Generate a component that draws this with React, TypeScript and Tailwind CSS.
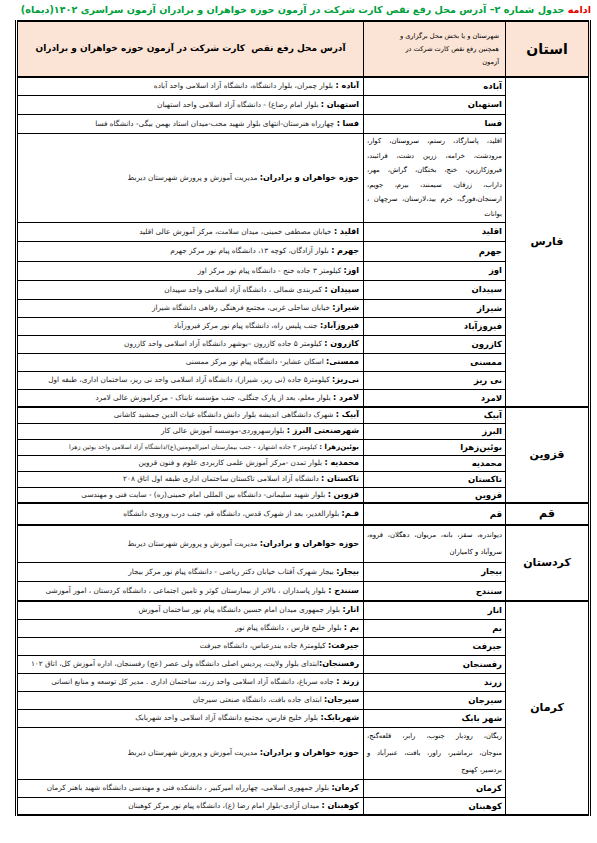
import React from 'react';

interface Row {
    city: string;
    label: string;
    addr: string;
    h: string;
    lines?: string[];   // several towns listed in one cell
    lead?: string;
    tiny?: boolean;
}

interface Province {
    name: string;
    rows: Row[];
}

const ZONE = 'حوزه خواهران و برادران:';
const ZONE_ADDR = ' مدیریت آموزش و پرورش شهرستان ذیربط';

const provinces: Province[] = [
    {
        name: 'فارس',
        rows: [
            { city: 'آباده', label: 'آباده :', addr: ' بلوار چمران، بلوار دانشگاه، دانشگاه آزاد اسلامی واحد آباده', h: 'h-[18px]' },
            { city: 'استهبان', label: 'استهبان :', addr: ' بلوار امام رضاع) - دانشگاه آزاد اسلامی واحد استهبان', h: 'h-[19px]' },
            { city: 'فسا', label: 'فسا :', addr: ' چهارراه هنرستان-انتهای بلوار شهید محب-میدان استاد بهمن بیگی- دانشگاه فسا', h: 'h-[19px]' },
            {
                city: '', label: ZONE, addr: ZONE_ADDR, h: 'h-[89px]', lead: 'leading-[14.5px]',
                lines: [
                    'اقلید، پاسارگاد، رستم، سروستان، کوار،',
                    'مرودشت، خرامه، زرین دشت، قرائبند،',
                    'فیروزکارزین، خنج، بختگان، گراش، مهر،',
                    'داراب، زرقان، سیمنند، بیرم، جویم،',
                    'ارسنجان،فورگ، خرم بید،لارستان، سرچهان ،',
                    'بوانات',
                ],
            },
            { city: 'اقلید', label: 'اقلید :', addr: ' خیابان مصطفی خمینی، میدان سلامت، مرکز آموزش عالی اقلید', h: 'h-[19px]' },
            { city: 'جهرم', label: 'جهرم :', addr: ' بلوار آزادگان، کوچه ۱۳، دانشگاه پیام نور مرکز جهرم', h: 'h-[20px]' },
            { city: 'اوز', label: 'اوز:', addr: ' کیلومتر ۳ جاده خنج - دانشگاه پیام نور مرکز اوز', h: 'h-[19px]' },
            { city: 'سپیدان', label: 'سپیدان :', addr: ' کمربندی شمالی ، دانشگاه آزاد اسلامی واحد سپیدان', h: 'h-[19px]' },
            { city: 'شیراز', label: 'شیراز:', addr: ' خیابان ساحلی غربی، مجتمع فرهنگی رفاهی دانشگاه شیراز', h: 'h-[18px]' },
            { city: 'فیروزآباد', label: 'فیروزآباد:', addr: ' جنب پلیس راه، دانشگاه پیام نور مرکز فیروزآباد', h: 'h-[18px]' },
            { city: 'کازرون', label: 'کازرون :', addr: ' کیلومتر ۵ جاده کازرون –بوشهر دانشگاه آزاد اسلامی واحد کازرون', h: 'h-[18px]' },
            { city: 'ممسنی', label: 'ممسنی:', addr: ' اسکان عشایر- دانشگاه پیام نور مرکز ممسنی', h: 'h-[18px]' },
            { city: 'نی ریز', label: 'نی‌ریز:', addr: ' کیلومتر۵ جاده (نی ریز، شیراز)، دانشگاه آزاد اسلامی واحد نی ریز، ساختمان اداری، طبقه اول', h: 'h-[18px]' },
            { city: 'لامرد', label: 'لامرد :', addr: ' بلوار معلم، بعد از پارک جنگلی، جنب مؤسسه تابناک - مرکزاموزش عالی لامرد', h: 'h-[18px]' },
        ],
    },
    {
        name: 'قزوین',
        rows: [
            { city: 'آبیک', label: 'آبیک :', addr: ' شهرک دانشگاهی اندیشه بلوار دانش دانشگاه غیاث الدین جمشید کاشانی', h: 'h-[16px]' },
            { city: 'البرز', label: 'شهرصنعتی البرز :', addr: ' بلوارسهروردی-موسسه آموزش عالی کار', h: 'h-[16px]' },
            { city: 'بوئین‌زهرا', label: 'بوئین‌زهرا :', addr: ' کیلومتر ۲ جاده اشتهارد - جنب بیمارستان امیرالمومنین(ع)/دانشگاه  آزاد اسلامی واحد بوئین زهرا', h: 'h-[16px]', tiny: true },
            { city: 'محمدیه', label: 'محمدیه :', addr: ' بلوار تمدن -مرکز آموزش علمی کاربردی علوم و فنون قزوین', h: 'h-[16px]' },
            { city: 'تاکستان', label: 'تاکستان :', addr: ' دانشگاه آزاد اسلامی تاکستان ساختمان اداری طبقه اول اتاق ۲۰۸', h: 'h-[16px]' },
            { city: 'قزوین', label: 'قزوین :', addr: ' بلوار شهید سلیمانی- دانشگاه بین المللی امام خمینی(ره) - سایت فنی و مهندسی', h: 'h-[16px]' },
        ],
    },
    {
        name: 'قم',
        rows: [
            { city: 'قم', label: 'قـم:', addr: ' بلوارالغدیر، بعد از شهرک قدس، دانشگاه قم، جنب درب ورودی دانشگاه', h: 'h-[22px]' },
        ],
    },
    {
        name: 'کردستان',
        rows: [
            {
                city: '', label: ZONE, addr: ZONE_ADDR, h: 'h-[37px]', lead: 'leading-[17px]',
                lines: ['دیواندره، سقز، بانه، مریوان، دهگلان، قروه،', 'سروآباد و کامیاران'],
            },
            { city: 'بیجار', label: 'بیجار:', addr: ' بیجار شهرک آفتاب خیابان دکتر ریاضی - دانشگاه پیام نور مرکز بیجار', h: 'h-[19px]' },
            { city: 'سنندج', label: 'سنندج :', addr: ' بلوار پاسداران ، بالاتر از بیمارستان کوثر و تامین اجتماعی ، دانشگاه کردستان ، امور آموزشی', h: 'h-[20px]' },
        ],
    },
    {
        name: 'کرمان',
        rows: [
            { city: 'انار', label: 'انار:', addr: ' بلوار جمهوری میدان امام حسین دانشگاه پیام نور ساختمان آموزش', h: 'h-[18px]' },
            { city: 'بم', label: 'بم :', addr: ' بلوار خلیج فارس ، دانشگاه پیام نور', h: 'h-[18px]' },
            { city: 'جیرفت', label: 'جیرفت:', addr: ' کیلومتر۸ جاده بندرعباس، دانشگاه جیرفت', h: 'h-[18px]' },
            { city: 'رفسنجان', label: 'رفسنجان:', addr: 'ابتدای بلوار ولایت، پردیس اصلی دانشگاه ولی عصر (عج) رفسنجان، اداره آموزش کل، اتاق ۱۰۲', h: 'h-[18px]' },
            { city: 'زرند', label: 'زرند :', addr: ' جاده سرباغ، دانشگاه آزاد اسلامی واحد زرند، ساختمان اداری . مدیر کل توسعه و منابع انسانی', h: 'h-[18px]' },
            { city: 'سیرجان', label: 'سیرجان:', addr: ' ابتدای جاده بافت، دانشگاه صنعتی سیرجان', h: 'h-[18px]' },
            { city: 'شهر بابک', label: 'شهربابک:', addr: ' بلوار خلیج فارس، مجتمع دانشگاه آزاد اسلامی واحد شهربابک', h: 'h-[18px]' },
            {
                city: '', label: ZONE, addr: ZONE_ADDR, h: 'h-[52px]', lead: 'leading-[17px]',
                lines: ['ریگان، رودبار جنوب، رابر، قلعه‌گنج،', 'منوجان، نرماشیر، راور، بافت، عنبرآباد و', 'بردسیر، کهنوج'],
            },
            { city: 'کرمان', label: 'کرمان:', addr: ' بلوار جمهوری اسلامی، چهارراه امیرکبیر ، دانشکده فنی و مهندسی دانشگاه شهید باهنر کرمان', h: 'h-[18px]' },
            { city: 'کوهبنان', label: 'کوهبنان :', addr: ' میدان آزادی-بلوار امام رضا (ع)، دانشگاه پیام نور مرکز کوهبنان', h: 'h-[18px]' },
        ],
    },
];

export default function App() {
    return (
        <div dir="rtl" className="w-[597px] min-h-[843px] bg-white pr-[6px] pl-[14px] pt-[1px] font-['DejaVu_Sans',sans-serif] text-black">
            <div className="h-[19px] whitespace-nowrap text-[9.6px] font-bold leading-[18px] text-[#00a03c]">
                <span className="text-[#e60000]">ادامه</span> جدول شماره ۲– آدرس محل رفع نقص کارت شرکت در آزمون حوزه خواهران و برادران آزمون سراسری ۱۴۰۲(دیماه)
            </div>
            <table className="w-[576px] table-fixed border-collapse border-x-[3px] border-y-2 border-double border-black">
                <colgroup>
                    <col className="w-[84px]" />
                    <col className="w-[142px]" />
                    <col />
                </colgroup>
                <thead>
                    <tr className="h-[56px] border-b-2 border-black bg-[#fbe4d5]">
                        <th className="border border-black text-center text-[14px] font-bold">استان</th>
                        <th className="border border-black px-[6px] text-right text-[6.6px] font-normal leading-[13px]">
                            <div>شهرستان و یا بخش محل برگزاری و</div>
                            <div>همچنین رفع نقص کارت شرکت در</div>
                            <div>آزمون</div>
                        </th>
                        <th className="whitespace-nowrap border border-black text-center text-[9px] font-bold">
                            آدرس محل رفع نقص&nbsp; کارت شرکت در آزمون حوزه خواهران و برادران
                        </th>
                    </tr>
                </thead>
                {provinces.map(p => (
                    <tbody key={p.name} className="border-t-2 border-black">
                        {p.rows.map((r, i) => (
                            <tr key={i} className={r.h}>
                                {i === 0 && (
                                    <td rowSpan={p.rows.length} className="border border-black text-center align-middle text-[11px] font-bold">
                                        {p.name}
                                    </td>
                                )}
                                {r.lines ? (
                                    <td className={`border border-black px-[3px] align-middle text-[6.8px] ${r.lead}`}>
                                        {r.lines.map((l, j) => (
                                            <div
                                                key={j}
                                                className={`whitespace-nowrap ${j < r.lines!.length - 1 ? 'text-justify [text-align-last:justify]' : 'text-right'}`}
                                            >
                                                {l}
                                            </div>
                                        ))}
                                    </td>
                                ) : (
                                    <td className="border border-black pr-[3px] text-right align-middle text-[8.5px] font-bold leading-none">
                                        {r.city}
                                    </td>
                                )}
                                <td className={`overflow-hidden whitespace-nowrap border border-black pr-[4px] text-right align-middle leading-none ${r.tiny ? 'text-[6.3px]' : 'text-[7.3px]'}`}>
                                    <span className={`font-bold ${r.tiny ? 'text-[7px]' : 'text-[8px]'}`}>{r.label}</span>
                                    <span className="text-[#222]">{r.addr}</span>
                                </td>
                            </tr>
                        ))}
                    </tbody>
                ))}
            </table>
        </div>
    );
}
